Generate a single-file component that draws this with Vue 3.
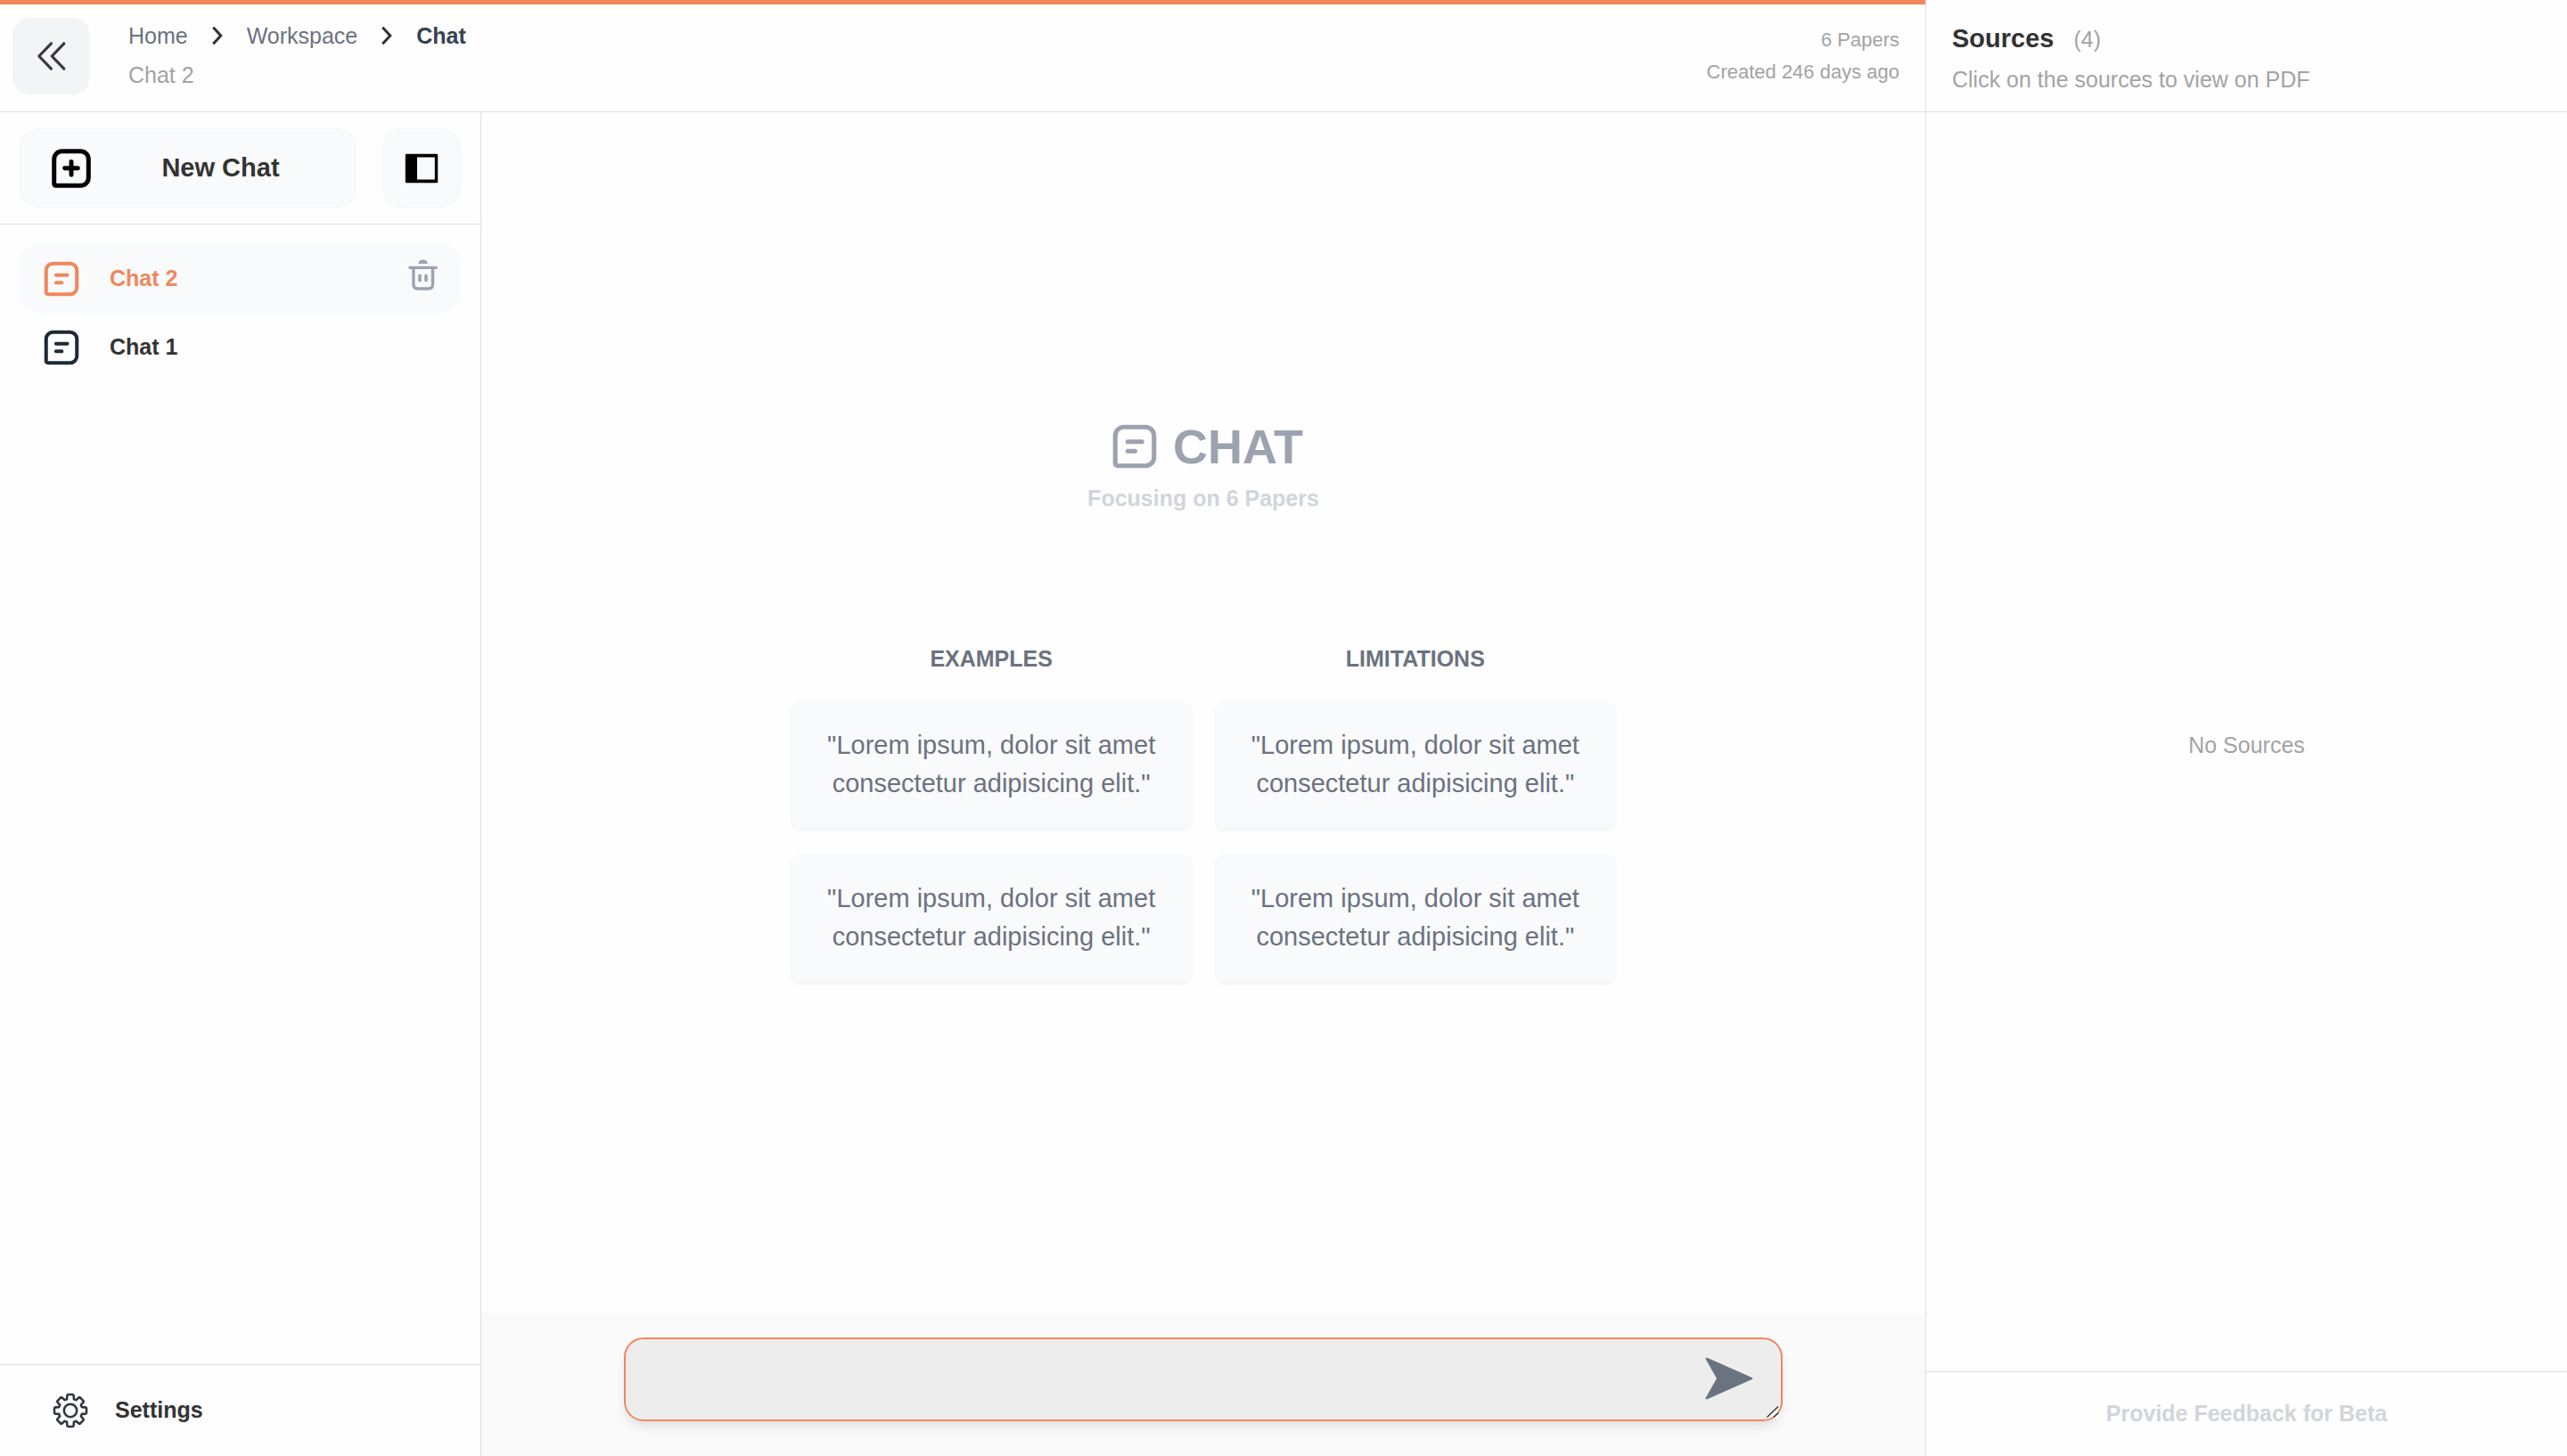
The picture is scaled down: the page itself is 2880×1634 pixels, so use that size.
<script setup>
import { ref } from 'vue'

const chats = ref([
  { id: 2, name: 'Chat 2', active: true },
  { id: 1, name: 'Chat 1', active: false },
])

const sample = '"Lorem ipsum, dolor sit amet consectetur adipisicing elit."'
const columns = [
  { title: 'EXAMPLES', items: [sample, sample] },
  { title: 'LIMITATIONS', items: [sample, sample] },
]

const message = ref('')

// Outline of the eight-toothed settings gear, centred on 0,0
const gearPath = (() => {
  const at = (r, deg) => {
    const a = (deg * Math.PI) / 180
    return `${(r * Math.cos(a)).toFixed(2)} ${(r * Math.sin(a)).toFixed(2)}`
  }
  const points = []
  for (let t = 0; t < 8; t++) {
    const c = t * 45
    points.push(at(13.4, c - 17), at(17.4, c - 12), at(18.2, c - 9), at(18.2, c + 9), at(17.4, c + 12), at(13.4, c + 17))
  }
  return 'M' + points.join('L') + 'Z'
})()
</script>

<template>
  <div class="app">
    <div class="workspace">
      <header class="topbar">
        <button class="back" type="button" aria-label="Back">
          <svg width="36" height="36" viewBox="0 0 36 36" fill="none" stroke="#373a45" stroke-width="3.2" stroke-linecap="round" stroke-linejoin="round">
            <path d="M17.4 3.8 3.8 18l13.6 14.2M31.8 3.8 18.2 18l13.6 14.2" />
          </svg>
        </button>
        <div class="trail">
          <nav class="crumbs" aria-label="Breadcrumb">
            <a href="#">Home</a>
            <svg class="sep" width="14" height="22" viewBox="0 0 14 22" fill="none" stroke="#2f3136" stroke-width="3"><path d="M2.2 1.8 10.8 11l-8.6 9.2" /></svg>
            <a href="#">Workspace</a>
            <svg class="sep" width="14" height="22" viewBox="0 0 14 22" fill="none" stroke="#2f3136" stroke-width="3"><path d="M2.2 1.8 10.8 11l-8.6 9.2" /></svg>
            <a href="#" class="current" aria-current="page">Chat</a>
          </nav>
          <p class="muted">Chat 2</p>
        </div>
        <div class="meta">
          <p>6 Papers</p>
          <p>Created 246 days ago</p>
        </div>
      </header>

      <div class="body">
        <aside class="sidebar">
          <div class="actions">
            <button class="new-chat" type="button">
              <svg width="52" height="52" viewBox="0 0 24 24" fill="none" stroke="#000" stroke-width="2.3" stroke-linecap="round" stroke-linejoin="round">
                <path d="M3.1 20V7.2a4.1 4.1 0 0 1 4.1-4.1h9.6a4.1 4.1 0 0 1 4.1 4.1v9.6a4.1 4.1 0 0 1-4.1 4.1H4a.9.9 0 0 1-.9-.9z" />
                <path d="M12 8.5v6.8M8.6 11.9h6.8" />
              </svg>
              <span>New Chat</span>
            </button>
            <button class="toggle" type="button" aria-label="Toggle sidebar">
              <svg width="38" height="34" viewBox="0 0 38 34">
                <path fill="#000" fill-rule="evenodd" d="M2 .8h34a1.2 1.2 0 0 1 1.2 1.2v30a1.2 1.2 0 0 1-1.2 1.2H2A1.2 1.2 0 0 1 .8 32V2A1.2 1.2 0 0 1 2 .8zM14 4.6v25h19.8v-25z" />
              </svg>
            </button>
          </div>

          <ul class="chats">
            <li v-for="chat in chats" :key="chat.id" :class="{ active: chat.active }">
              <a href="#">
                <svg width="46" height="46" viewBox="0 0 24 24" fill="none" stroke="currentColor" stroke-width="2.1" stroke-linecap="round" stroke-linejoin="round">
                  <path d="M3 20V7a4 4 0 0 1 4-4h10a4 4 0 0 1 4 4v10a4 4 0 0 1-4 4H4a1 1 0 0 1-1-1z" />
                  <path d="M8.8 9.8h6.6M8.8 14.2h3.4" />
                </svg>
                <span>{{ chat.name }}</span>
              </a>
              <button v-if="chat.active" class="delete" type="button" aria-label="Delete chat">
                <svg width="36" height="36" viewBox="0 0 36 36" fill="none" stroke="#9ca3af">
                  <path d="M12.2 6Q13 1.6 17.6 1.6T23 6z" fill="#9ca3af" stroke="none" />
                  <path d="M1.6 10.4h32M6.9 11v18q0 5 5 5h11.6q5 0 5-5V11" stroke-width="3.4" />
                  <path d="M14 19.4v5.4M21 19.4v5.4" stroke-width="3.6" stroke-linecap="round" />
                </svg>
              </button>
            </li>
          </ul>

          <a class="settings" href="#">
            <svg width="42" height="42" viewBox="-21 -21 42 42" fill="none" stroke="#333640" stroke-width="2.6" stroke-linejoin="round">
              <path :d="gearPath" />
              <circle r="7.2" />
            </svg>
            <span>Settings</span>
          </a>
        </aside>

        <main class="main">
          <section class="intro">
            <h1>
              <svg width="58" height="58" viewBox="0 0 24 24" fill="none" stroke="currentColor" stroke-width="2.1" stroke-linecap="round" stroke-linejoin="round">
                <path d="M3 20V7a4 4 0 0 1 4-4h10a4 4 0 0 1 4 4v10a4 4 0 0 1-4 4H4a1 1 0 0 1-1-1z" />
                <path d="M8.8 9.8h6.6M8.8 14.2h3.4" />
              </svg>
              CHAT
            </h1>
            <p class="focus">Focusing on 6 Papers</p>
            <div class="columns">
              <div v-for="col in columns" :key="col.title" class="column">
                <h2>{{ col.title }}</h2>
                <p v-for="(item, i) in col.items" :key="i" class="card">{{ item }}</p>
              </div>
            </div>
          </section>

          <form class="composer" @submit.prevent>
            <div class="field">
              <textarea v-model="message" aria-label="Message"></textarea>
              <button class="send" type="submit" aria-label="Send">
                <svg width="56" height="50" viewBox="0 0 56 50" fill="#6b7280">
                  <path d="M3.4 1.7 53.6 24q1.6 1 0 2L3.4 48.3q-2.6.4-1.6-1.9L14 25 1.8 3.6Q.8 1.3 3.4 1.7z" />
                </svg>
              </button>
              <svg class="grip" width="16" height="16" viewBox="0 0 16 16" fill="none">
                <path d="M2.5 14.5 15 2.5M10 14.5l6-5.5" stroke="#fff" stroke-width="3" />
                <path d="M1.5 13.5 14 1.5M9 13.5l5.5-5" stroke="#333" stroke-width="1.5" />
              </svg>
            </div>
          </form>
        </main>
      </div>
    </div>

    <aside class="sources">
      <header class="sources-head">
        <h2>Sources <span>(4)</span></h2>
        <p>Click on the sources to view on PDF</p>
      </header>
      <p class="empty">No Sources</p>
      <footer class="feedback"><a href="#">Provide Feedback for Beta</a></footer>
    </aside>
  </div>
</template>

<style>
body {
  margin: 0;
  background: #fefefe;
}
</style>

<style scoped>
.app {
  display: grid;
  grid-template-columns: 3fr 1fr;
  min-height: 100vh;
  font-family: "Liberation Sans", Arial, sans-serif;
  font-size: 25px;
  line-height: 36px;
  color: #333;
}
.app *,
.app {
  box-sizing: border-box;
}
h1, h2, p, ul {
  margin: 0;
  padding: 0;
}
a {
  color: inherit;
  text-decoration: none;
}
button {
  display: flex;
  align-items: center;
  justify-content: center;
  padding: 0;
  border: 0;
  background: none;
  font: inherit;
  color: inherit;
  cursor: pointer;
}
svg {
  display: block;
  flex: none;
}

.workspace {
  display: flex;
  flex-direction: column;
  min-width: 0;
}
.topbar {
  display: flex;
  align-items: flex-start;
  height: 126px;
  padding: 15px 29px 0 14px;
  border-top: 5px solid #f0875d;
  border-bottom: 1px solid #dedede;
}
.back {
  width: 87px;
  height: 86px;
  border-radius: 20px;
  background: #f3f4f6;
}
.trail {
  display: flex;
  flex-direction: column;
  gap: 8px;
  flex: 1;
  padding: 2px 0 0 43px;
}
.crumbs {
  display: flex;
  align-items: center;
  color: #6b7280;
}
.sep {
  margin: 0 26px;
}
.current {
  font-weight: 700;
  color: #374151;
}
.muted {
  color: #a3a3a3;
}
.meta {
  padding-top: 7px;
  font-size: 22px;
  text-align: right;
  color: #a3a3a3;
}

.body {
  display: grid;
  grid-template-columns: 1fr 3fr;
  flex: 1;
}
.sidebar {
  display: flex;
  flex-direction: column;
  border-right: 1px solid #dedede;
  font-weight: 700;
}
.actions {
  display: flex;
  gap: 29px;
  padding: 18px 22px;
  border-bottom: 1px solid #dedede;
}
.new-chat,
.toggle {
  height: 89px;
  border: 1px solid #f3f4f6;
  border-radius: 22px;
  background: #f9fafb;
}
.new-chat {
  flex: 1;
  padding: 0 10px 0 31px;
  font-size: 29px;
}
.new-chat span {
  flex: 1;
  padding-bottom: 2px;
  text-align: center;
}
.toggle {
  width: 88px;
}
.chats {
  flex: 1;
  padding: 22px;
  list-style: none;
}
.chats li {
  display: flex;
  align-items: center;
  height: 77px;
  padding: 0 24px;
  border-radius: 22px;
}
.chats li.active {
  background: #f9fafb;
}
.chats a {
  display: flex;
  align-items: center;
  gap: 31px;
  flex: 1;
}
.chats span,
.settings span {
  padding-bottom: 2px;
}
.chats svg {
  color: #1f2937;
}
.chats .active a,
.chats .active a svg {
  color: #f0875d;
}
.delete {
  padding-bottom: 9px;
}
.settings {
  display: flex;
  align-items: center;
  gap: 29px;
  height: 103px;
  padding-left: 58px;
  border-top: 1px solid #dedede;
}

.main {
  display: flex;
  flex-direction: column;
}
.intro {
  display: flex;
  flex-direction: column;
  align-items: center;
  justify-content: center;
  flex: 1;
  padding-bottom: 30px;
  text-align: center;
}
h1 {
  display: flex;
  align-items: center;
  gap: 14px;
  padding-left: 6px;
  font-size: 54px;
  line-height: 65px;
  color: #9ca3af;
}
.focus {
  margin-top: 7px;
  font-weight: 700;
  color: #d1d5db;
}
.columns {
  display: grid;
  grid-template-columns: 1fr 1fr;
  gap: 28px;
  width: 57%;
  margin-top: 143px;
  color: #6b7280;
}
.column {
  display: flex;
  flex-direction: column;
  gap: 28px;
}
h2 {
  font-size: 25px;
  line-height: 38px;
}
.card {
  padding: 29px;
  border-radius: 11px;
  background: #f9fafb;
  box-shadow: 0 2px 4px rgba(0, 0, 0, 0.05);
  font-size: 29px;
  line-height: 43px;
}
.composer {
  padding: 27px 160px 39px;
  background: #fafafa;
}
.field {
  position: relative;
}
textarea {
  display: block;
  width: 100%;
  height: 94px;
  padding: 24px 120px 24px 28px;
  border: 2px solid #f0875d;
  border-radius: 22px;
  outline: 0;
  background: #ededed;
  box-shadow: 0 8px 12px -2px rgba(0, 0, 0, 0.1);
  font: inherit;
  color: inherit;
  resize: none;
}
.send {
  position: absolute;
  top: 21px;
  right: 32px;
}
.grip {
  position: absolute;
  right: 3px;
  bottom: 2px;
  pointer-events: none;
}

.sources {
  display: flex;
  flex-direction: column;
  border-left: 1px solid #dedede;
  color: #a3a3a3;
}
.sources-head {
  height: 126px;
  padding: 25px 29px 0;
  border-bottom: 1px solid #dedede;
}
.sources-head h2 {
  display: flex;
  align-items: baseline;
  gap: 22px;
  font-size: 29px;
  line-height: 36px;
  color: #333;
}
.sources-head h2 span {
  font-size: 25px;
  font-weight: 400;
  color: #a3a3a3;
}
.sources-head p {
  margin-top: 9px;
}
.empty {
  display: flex;
  align-items: center;
  justify-content: center;
  flex: 1;
  padding-top: 7px;
}
.feedback {
  display: flex;
  align-items: center;
  justify-content: center;
  height: 95px;
  padding-bottom: 2px;
  border-top: 1px solid #dedede;
  font-weight: 700;
  color: #d1d5db;
}
</style>
